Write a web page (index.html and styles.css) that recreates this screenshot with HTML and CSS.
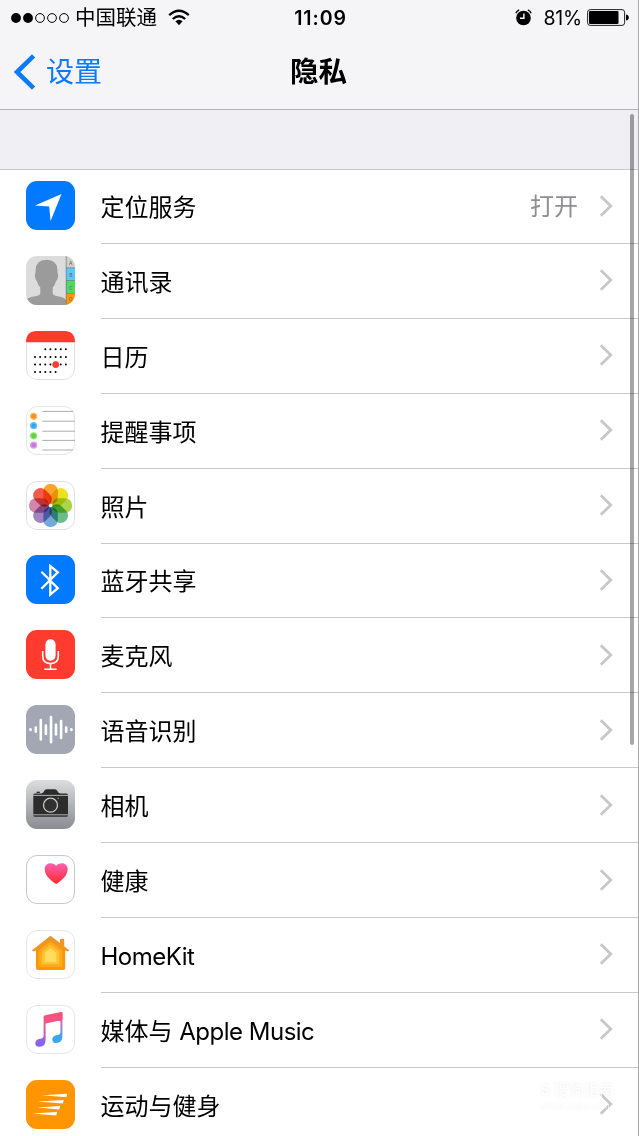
FILE: index.html
```html
<!DOCTYPE html>
<html lang="zh-CN">
<head>
    <meta charset="UTF-8">
    <meta name="viewport" content="width=device-width, initial-scale=1.0">
    <title>隐私</title>
    <link rel="stylesheet" href="styles.css">
</head>
<body>
    <!-- 公用图标 -->
    <svg class="defs" width="0" height="0">
        <symbol id="chevron" viewBox="0 0 14 24">
            <path d="M1.8 2.2 L11.8 12 L1.8 21.8" fill="none" stroke="#c7c7cc" stroke-width="2.8"/>
        </symbol>
    </svg>

    <header class="header">
        <div class="status-bar">
            <div class="status-left">
                <svg width="58" height="12" viewBox="0 0 58 12">
                    <circle cx="5" cy="6" r="4.9"/>
                    <circle cx="17" cy="6" r="4.9"/>
                    <g fill="none" stroke="#000" stroke-width="1">
                        <circle cx="29" cy="6" r="4.4"/>
                        <circle cx="41" cy="6" r="4.4"/>
                        <circle cx="53" cy="6" r="4.4"/>
                    </g>
                </svg>
                <span class="carrier">中国联通</span>
                <svg class="wifi" width="22" height="17" viewBox="0 0 22 17">
                    <g fill="none" stroke="#000" stroke-width="2.3">
                        <path d="M1.2 6.2 Q11 -2.6 20.8 6.2"/>
                        <path d="M4.8 10 Q11 4.4 17.2 10"/>
                    </g>
                    <path d="M7.4 12.3 Q11 9.2 14.6 12.3 L11 16.2 Z"/>
                </svg>
            </div>
            <span class="time">11:09</span>
            <div class="status-right">
                <svg width="17" height="17" viewBox="0 0 17 17">
                    <circle cx="8.5" cy="9" r="7.3"/>
                    <path d="M0.8 4.2 Q1.8 1.8 4.2 0.9 M12.8 0.9 Q15.2 1.8 16.2 4.2" fill="none" stroke="#000" stroke-width="1.3"/>
                    <path d="M8.9 4.6 V9.3 H5" fill="none" stroke="#fff" stroke-width="1.4"/>
                </svg>
                <span class="percent">81%</span>
                <svg class="battery" width="43" height="17" viewBox="0 0 43 17">
                    <rect x="0.6" y="0.6" width="37" height="15.8" rx="2.6" fill="none" stroke="#222" stroke-width="1"/>
                    <rect x="2" y="2" width="29.5" height="13" rx="1"/>
                    <path d="M39 5.5 Q41.8 6 41.8 8.5 Q41.8 11 39 11.5 Z"/>
                </svg>
            </div>
        </div>
        <nav class="navbar">
            <a class="back" href="#">
                <svg width="22" height="36" viewBox="0 0 22 36">
                    <path d="M19.6 1.8 L3 18 L19.6 34.2" fill="none" stroke="#0a7aff" stroke-width="4.6"/>
                </svg>
                <span>设置</span>
            </a>
            <h1 class="title">隐私</h1>
        </nav>
    </header>

    <main class="content">
        <ul class="list">
            <li class="row">
                <svg class="icon" viewBox="0 0 49 49">
                    <rect width="49" height="49" rx="11" fill="#027aff"/>
                    <path d="M35.5 13 L24.6 40 L23.2 25.6 L9 24.6 Z" fill="#fff"/>
                </svg>
                <div class="cell">
                    <span class="label">定位服务</span>
                    <span class="value">打开</span>
                    <svg class="arrow"><use href="#chevron"/></svg>
                </div>
            </li>
            <li class="row">
                <svg class="icon" viewBox="0 0 49 49">
                    <clipPath id="clip"><rect width="49" height="49" rx="11"/></clipPath>
                    <g clip-path="url(#clip)">
                        <rect width="49" height="49" fill="#dcdcdc"/>
                        <path d="M0 44 Q2 41.5 8 40.6 Q14 39.5 14.3 37.5 V31.5 Q12 29.5 11.2 25.8 Q9 24 8.8 19.5 Q9.5 18 9.6 14 Q9.8 4 20.5 3.7 Q31.3 4 31.4 14 Q31.5 18 32.2 19.5 Q32 24 29.8 25.8 Q29 29.5 26.7 31.5 V37.5 Q27 39.5 33 40.6 Q38 41.5 40 44 V49 H0 Z" fill="#9b9b9b"/>
                        <rect x="40" width="9" height="12" fill="#d2cfc9"/>
                        <rect x="40" y="12" width="9" height="12.5" fill="#5ac8fa"/>
                        <rect x="40" y="24.5" width="9" height="13" fill="#4cd964"/>
                        <rect x="40" y="37.5" width="9" height="12" fill="#ff9500"/>
                        <path d="M40.2 0 V49 M40 11.8 H49 M40 24.5 H49 M40 37.4 H49" stroke="#777" stroke-width="0.7"/>
                        <g class="tab-letters">
                            <text x="44.8" y="9">A</text>
                            <text x="44.8" y="20.8">B</text>
                            <text x="44.8" y="33.5">C</text>
                            <text x="44.8" y="44.5">D</text>
                        </g>
                    </g>
                </svg>
                <div class="cell">
                    <span class="label">通讯录</span>
                    <svg class="arrow"><use href="#chevron"/></svg>
                </div>
            </li>
            <li class="row">
                <svg class="icon" viewBox="0 0 49 49">
                    <rect x="0.5" y="0.5" width="48" height="48" rx="10.5" fill="#fff" stroke="#e2e2e2"/>
                    <path d="M0 11.3 Q0 0 11 0 H38 Q49 0 49 11.3 Z" fill="#ff3b30"/>
                    <g fill="none" stroke="#000" stroke-width="2" stroke-linecap="round" stroke-dasharray="0 5.15">
                        <path d="M19.3 18.2 H40.5"/>
                        <path d="M9 26 H40.5"/>
                        <path d="M9 33.6 H40.5"/>
                        <path d="M9 41 H30"/>
                    </g>
                    <circle cx="29.7" cy="33.6" r="3.4" fill="#ff3b30"/>
                </svg>
                <div class="cell">
                    <span class="label">日历</span>
                    <svg class="arrow"><use href="#chevron"/></svg>
                </div>
            </li>
            <li class="row">
                <svg class="icon" viewBox="0 0 49 49">
                    <rect x="0.5" y="0.5" width="48" height="48" rx="10.5" fill="#fff" stroke="#e6e6e6"/>
                    <path d="M16.3 5.4 H47 M16.3 15.2 H49 M16.3 25.2 H49 M16.3 34.4 H49 M16.3 44 H47" stroke="#a4a4a4" stroke-width="0.9"/>
                    <g stroke-width="1.2">
                        <circle cx="7.6" cy="10.3" r="3" fill="#f7941d" stroke="#fbb45c"/>
                        <circle cx="7.6" cy="19.7" r="3" fill="#2ea7f0" stroke="#6cc4f7"/>
                        <circle cx="7.6" cy="29.8" r="3" fill="#5fd23c" stroke="#90e374"/>
                        <circle cx="7.6" cy="39.2" r="3" fill="#c879de" stroke="#dba4ea"/>
                    </g>
                </svg>
                <div class="cell">
                    <span class="label">提醒事项</span>
                    <svg class="arrow"><use href="#chevron"/></svg>
                </div>
            </li>
            <li class="row">
                <svg class="icon" viewBox="0 0 49 49">
                    <rect x="0.5" y="0.5" width="48" height="48" rx="10.5" fill="#fff" stroke="#e2e2e2"/>
                    <g class="petals" transform="translate(24.6 24.5)">
                        <rect x="-7.2" y="-21.5" width="14.4" height="20" rx="6.8" fill="#fba32a"/>
                        <rect x="-7.2" y="-21.5" width="14.4" height="20" rx="6.8" fill="#ece11f" transform="rotate(45)"/>
                        <rect x="-7.2" y="-21.5" width="14.4" height="20" rx="6.8" fill="#acd54c" transform="rotate(90)"/>
                        <rect x="-7.2" y="-21.5" width="14.4" height="20" rx="6.8" fill="#68bd8b" transform="rotate(135)"/>
                        <rect x="-7.2" y="-21.5" width="14.4" height="20" rx="6.8" fill="#75a9dc" transform="rotate(180)"/>
                        <rect x="-7.2" y="-21.5" width="14.4" height="20" rx="6.8" fill="#a184bf" transform="rotate(225)"/>
                        <rect x="-7.2" y="-21.5" width="14.4" height="20" rx="6.8" fill="#d086ae" transform="rotate(270)"/>
                        <rect x="-7.2" y="-21.5" width="14.4" height="20" rx="6.8" fill="#f05b4b" transform="rotate(315)"/>
                    </g>
                    <circle cx="24.6" cy="24.5" r="1.3" fill="#fff"/>
                </svg>
                <div class="cell">
                    <span class="label">照片</span>
                    <svg class="arrow"><use href="#chevron"/></svg>
                </div>
            </li>
            <li class="row">
                <svg class="icon" viewBox="0 0 49 49">
                    <rect width="49" height="49" rx="11" fill="#027aff"/>
                    <path d="M15.4 16.8 L31.8 33.2 L24.3 39.6 V11 L31.8 17.4 L15.4 33.8" fill="none" stroke="#fff" stroke-width="2.3"/>
                </svg>
                <div class="cell">
                    <span class="label">蓝牙共享</span>
                    <svg class="arrow"><use href="#chevron"/></svg>
                </div>
            </li>
            <li class="row">
                <svg class="icon" viewBox="0 0 49 49">
                    <rect width="49" height="49" rx="11" fill="#ff3b30"/>
                    <rect x="19.4" y="9.3" width="10.2" height="21.4" rx="5.1" fill="#fff"/>
                    <path d="M16.7 21 V26 Q16.7 33.6 24.5 33.6 Q32.3 33.6 32.3 26 V21 M24.5 33.6 V39 M18.3 39.2 H30.7" fill="none" stroke="#fff" stroke-width="1.6"/>
                </svg>
                <div class="cell">
                    <span class="label">麦克风</span>
                    <svg class="arrow"><use href="#chevron"/></svg>
                </div>
            </li>
            <li class="row">
                <svg class="icon" viewBox="0 0 49 49">
                    <rect width="49" height="49" rx="11" fill="#a2a7b3"/>
                    <path d="M4.5 24.3 V25 M9.8 22.5 V26.8 M14.8 15 V34.5 M19.9 20.5 V29 M25 12 V37.3 M30 19.8 V29.5 M35.1 16 V33 M40.2 22.5 V26.8 M45.4 24.3 V25" stroke="#fff" stroke-width="2.6" stroke-linecap="round"/>
                </svg>
                <div class="cell">
                    <span class="label">语音识别</span>
                    <svg class="arrow"><use href="#chevron"/></svg>
                </div>
            </li>
            <li class="row">
                <svg class="icon" viewBox="0 0 49 49">
                    <linearGradient id="camera" x1="0" y1="0" x2="0" y2="1">
                        <stop offset="0" stop-color="#dbddde"/>
                        <stop offset="1" stop-color="#898b91"/>
                    </linearGradient>
                    <rect width="49" height="49" rx="11" fill="url(#camera)"/>
                    <path d="M7.3 15 Q7.3 13.4 9 13.4 H15.5 Q17.4 13.2 18.3 10.8 Q19 9.2 20.5 9.2 H29 Q30.5 9.2 31.2 10.8 Q32.1 13.2 34 13.4 H40.2 Q42 13.4 42 15 V35.5 Q42 36.8 40.5 36.8 H8.8 Q7.3 36.8 7.3 35.5 Z" fill="#2c2c2c"/>
                    <rect x="10.5" y="11.7" width="3.4" height="1.2" fill="#222"/>
                    <path d="M7.3 15.4 H42 M7.3 34.8 H42" stroke="#d5d6d8" stroke-width="0.8"/>
                    <circle cx="24.5" cy="25.2" r="8.3" fill="#2c2c2c"/>
                    <circle cx="24.5" cy="25.2" r="7" fill="#303030" stroke="#c9cacc" stroke-width="1.3"/>
                    <circle cx="32.2" cy="18.2" r="0.7" fill="#d9a436"/>
                </svg>
                <div class="cell">
                    <span class="label">相机</span>
                    <svg class="arrow"><use href="#chevron"/></svg>
                </div>
            </li>
            <li class="row">
                <svg class="icon" viewBox="0 0 49 49">
                    <linearGradient id="heart" x1="0" y1="0" x2="0" y2="1">
                        <stop offset="0" stop-color="#ff5fb2"/>
                        <stop offset="1" stop-color="#ff2b2b"/>
                    </linearGradient>
                    <rect x="0.5" y="0.5" width="48" height="48" rx="10.5" fill="#fff" stroke="#c9c9c9"/>
                    <path d="M30.2 29 C25 25.5 18.7 20.8 18.7 14.2 C18.7 10.6 21.2 8.2 24.5 8.2 C27 8.2 29 9.2 30.2 11 C31.4 9.2 33.4 8.2 35.9 8.2 C39.2 8.2 41.7 10.6 41.7 14.2 C41.7 20.8 35.4 25.5 30.2 29 Z" fill="url(#heart)"/>
                </svg>
                <div class="cell">
                    <span class="label">健康</span>
                    <svg class="arrow"><use href="#chevron"/></svg>
                </div>
            </li>
            <li class="row">
                <svg class="icon" viewBox="0 0 49 49">
                    <linearGradient id="house" x1="0" y1="0" x2="0" y2="1">
                        <stop offset="0" stop-color="#e8962c"/>
                        <stop offset="1" stop-color="#ff9800"/>
                    </linearGradient>
                    <rect x="0.5" y="0.5" width="48" height="48" rx="10.5" fill="#fff" stroke="#e6e6e6"/>
                    <path d="M24.5 5.8 L34 13 V9.8 Q34 8.8 35 8.8 H37.2 Q38.2 8.8 38.2 9.8 V16.2 L43.2 20.2 Q42.8 21.6 41.2 21.2 L39.2 20.6 V38 Q39.2 40 37.2 40 H12 Q10 40 10 38 V20.6 L8 21.2 Q6.4 21.6 6 20.2 Z" fill="url(#house)"/>
                    <path d="M24.5 11.2 L36.2 20.4 V37 H12.9 V20.4 Z" fill="#ffa81c"/>
                    <path d="M24.5 14.6 L33.3 21.7 V34.2 H15.8 V21.7 Z" fill="#ffc22e"/>
                    <path d="M24.5 18.2 L30.3 23 V32.2 H18.8 V23 Z" fill="#ffdc5e"/>
                </svg>
                <div class="cell">
                    <span class="label latin">HomeKit</span>
                    <svg class="arrow"><use href="#chevron"/></svg>
                </div>
            </li>
            <li class="row">
                <svg class="icon" viewBox="0 0 49 49">
                    <linearGradient id="noteLeft" x1="0" y1="0" x2="0" y2="1">
                        <stop offset="0" stop-color="#fb4d74"/>
                        <stop offset="0.35" stop-color="#f0588f"/>
                        <stop offset="1" stop-color="#7566ff"/>
                    </linearGradient>
                    <linearGradient id="noteRight" x1="0" y1="0" x2="0" y2="1">
                        <stop offset="0" stop-color="#f6527b"/>
                        <stop offset="0.4" stop-color="#c86fc4"/>
                        <stop offset="0.8" stop-color="#35a6ee"/>
                        <stop offset="1" stop-color="#3ba8ee"/>
                    </linearGradient>
                    <rect x="0.5" y="0.5" width="48" height="48" rx="10.5" fill="#fff" stroke="#e6e6e6"/>
                    <path d="M34.4 7.2 Q36.4 6.8 36.4 8.4 V31 Q36.4 38 30.4 38 Q26.3 38 26.3 34.4 Q26.3 30.8 31.6 30 Q34.4 29.6 34.4 27.5 V16 L32 16 Z" fill="url(#noteRight)"/>
                    <path d="M17.6 12 Q17.6 10.5 19.2 10.2 L34.8 7 Q36.4 6.8 36.4 8.4 V15 L19.6 18.5 V34.5 Q19.6 41.8 13.5 41.8 Q9.3 41.8 9.3 38.2 Q9.3 34.6 14.4 33.8 Q17.6 33.3 17.6 31 Z" fill="url(#noteLeft)"/>
                </svg>
                <div class="cell">
                    <span class="label">媒体与 <span class="latin">Apple Music</span></span>
                    <svg class="arrow"><use href="#chevron"/></svg>
                </div>
            </li>
            <li class="row">
                <svg class="icon" viewBox="0 0 49 49">
                    <rect width="49" height="49" rx="11" fill="#ff9500"/>
                    <path d="M16 15.3 L41.2 13.7 L40.4 17.2 Z M11.2 21.6 L37.8 20 L36.8 23.6 Z M11 27.6 L34.2 26 L33.2 29.6 Z M6 33.6 L31.2 32 L30.2 35.6 Z" fill="#fff"/>
                </svg>
                <div class="cell">
                    <span class="label">运动与健身</span>
                    <svg class="arrow"><use href="#chevron"/></svg>
                </div>
            </li>
        </ul>
    </main>

    <div class="scrollbar"></div>
    <div class="watermark">
        <div class="watermark-name"><b>S</b> 搜狗指南</div>
        <div class="watermark-url">zhinan.sogou.com</div>
    </div>
</body>
</html>
```
FILE: styles.css
```css
* {
    box-sizing: border-box;
}

body {
    margin: 0;
    height: 1136px;
    overflow: hidden;
    position: relative;
    background: #efeff4;
    color: #000;
    font-family: Inter, "Noto Sans CJK SC", sans-serif;
    border-right: 1px solid #a9a9ab;
}

.defs {
    position: absolute;
}

/* 顶部 */
.header {
    height: 110px;
    background: #f5f5f7;
    border-bottom: 1px solid #b2b2b4;
}

.status-bar {
    display: grid;
    grid-template-columns: 1fr auto 1fr;
    align-items: center;
    height: 35px;
    padding: 0 8px 0 11px;
}

.status-left,
.status-right {
    display: flex;
    align-items: center;
}

.status-right {
    justify-content: flex-end;
}

.carrier {
    margin-left: 6px;
    font-size: 20.5px;
    line-height: 35px;
}

.wifi {
    margin-left: 11px;
}

.time {
    font-size: 19.5px;
    font-weight: 600;
    letter-spacing: 0.9px;
}

.percent {
    margin: 0 5px 0 11px;
    font-size: 19.5px;
    letter-spacing: -0.2px;
}

.navbar {
    display: grid;
    grid-template-columns: 1fr auto 1fr;
    align-items: center;
    height: 74px;
    padding: 0 15px 0 14px;
}

.back {
    display: flex;
    align-items: center;
    gap: 10px;
    color: #0a7aff;
    font-size: 28px;
    line-height: 40px;
    text-decoration: none;
}

.title {
    margin: 0;
    font-size: 28.5px;
    font-weight: 600;
    line-height: 40px;
}

/* 列表 */
.content {
    padding-top: 59px;
}

.list {
    margin: 0;
    padding: 0;
    list-style: none;
    background: #fff;
    border-top: 1px solid #c8c7cc;
}

.row {
    display: flex;
    height: 74.9px;
    padding-left: 26px;
}

.icon {
    flex: none;
    width: 49px;
    height: 49px;
    margin: 11px 25.5px 0 0;
}

.cell {
    flex: 1;
    display: flex;
    align-items: center;
    height: 74px;
    padding-right: 25px;
    border-bottom: 1px solid #c8c7cc;
}

.label {
    flex: 1;
    padding-top: 3px;
    font-size: 24px;
    line-height: 36px;
}

.latin {
    letter-spacing: -0.5px;
}

.value {
    margin-right: 21px;
    padding-top: 1px;
    color: #8e8e93;
    font-size: 24px;
    line-height: 36px;
}

.arrow {
    width: 14px;
    height: 24px;
    margin-bottom: 2px;
}

.tab-letters {
    fill: #666;
    font-size: 5px;
    text-anchor: middle;
}

.petals {
    isolation: isolate;
}

.petals rect {
    mix-blend-mode: multiply;
}

/* 浮层 */
.scrollbar {
    position: absolute;
    top: 114px;
    right: 4px;
    width: 4px;
    height: 631px;
    border-radius: 2px;
    background: rgba(0, 0, 0, 0.35);
}

.watermark {
    position: absolute;
    left: 540px;
    top: 1079px;
    color: rgba(255, 255, 255, 0.85);
    text-shadow: 0 0 3px rgba(0, 0, 0, 0.08);
}

.watermark-name {
    font-size: 15px;
    line-height: 22px;
}

.watermark-url {
    font-size: 8px;
    line-height: 10px;
}
```
